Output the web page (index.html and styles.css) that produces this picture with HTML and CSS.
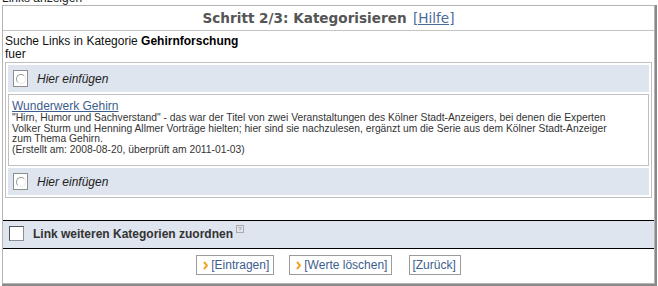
FILE: index.html
```html
<!DOCTYPE html>
<html lang="de">
<head>
  <meta charset="UTF-8" />
  <title>Links eintragen</title>
  <link rel="stylesheet" href="styles.css">
</head>
<body>
  <div class="crumb">Links anzeigen</div>

  <div class="frame">
    <div class="panel">
      <!-- Kopf -->
      <div class="head">
        <span class="step">Schritt 2/3: Kategorisieren</span>
        <a class="help" href="#">[Hilfe]</a>
      </div>

      <div class="search">
        Suche Links in Kategorie <b>Gehirnforschung</b><br />
        fuer
      </div>

      <!-- Linkliste -->
      <div class="list">
        <div class="slot">
          <span class="radio"><span class="dot"></span></span>
          <span class="slot-label">Hier einfügen</span>
        </div>
        <div class="entry">
          <a class="entry-title" href="#">Wunderwerk Gehirn</a>
          <p class="entry-text">"Hirn, Humor und Sachverstand" - das war der Titel von zwei Veranstaltungen des Kölner Stadt-Anzeigers, bei denen die Experten Volker Sturm und Henning Allmer Vorträge hielten; hier sind sie nachzulesen, ergänzt um die Serie aus dem Kölner Stadt-Anzeiger zum Thema Gehirn.<br />(Erstellt am: 2008-08-20, überprüft am 2011-01-03)</p>
        </div>
        <div class="slot">
          <span class="radio"><span class="dot"></span></span>
          <span class="slot-label">Hier einfügen</span>
        </div>
      </div>

      <!-- weitere Kategorien -->
      <div class="more">
        <span class="check"></span>
        <span class="more-label">Link weiteren Kategorien zuordnen</span>
        <span class="qmark">?</span>
      </div>

      <div class="actions">
        <a class="btn" href="#">
          <svg class="arrow" width="5" height="9" viewBox="0 0 5 9"><polyline points="1,1 4,4.5 1,8" fill="none" stroke="#f2a31c" stroke-width="2"/></svg>[Eintragen]</a>
        <a class="btn" href="#">
          <svg class="arrow" width="5" height="9" viewBox="0 0 5 9"><polyline points="1,1 4,4.5 1,8" fill="none" stroke="#f2a31c" stroke-width="2"/></svg>[Werte löschen]</a>
        <a class="btn plain" href="#">[Zurück]</a>
      </div>
    </div>
  </div>
</body>
</html>
```

FILE: styles.css
```css
* { margin: 0; padding: 0; box-sizing: border-box; }
body {
  font-family: "Liberation Sans", Arial, sans-serif;
  font-size: 12px;
  color: #222;
  background: #fff;
  width: 658px;
  height: 286px;
  overflow: hidden;
}
a { color: #3d5d8e; }

.crumb {
  font-size: 12px;
  line-height: 14px;
  margin-top: -9px;
  padding-left: 2px;
  color: #222;
}

.frame {
  margin-left: 2px;
  width: 655px;
  border-right: 2px solid #8a8a8a;
  border-bottom: 2px solid #8a8a8a;
}
.panel {
  border: 1px solid #b4b4b4;
  height: 279px;
}

.head {
  height: 25px;
  border-bottom: 1px solid #c4c4c4;
  text-align: center;
  padding-top: 4px;
  font-family: "DejaVu Sans", Verdana, sans-serif;
  font-size: 13.6px;
}
.step { font-weight: bold; color: #555; }
.help { color: #4b6b9b; margin-left: 2px; }

.search {
  padding: 4px 2px 0;
  line-height: 13px;
  color: #111;
}
.search b { font-weight: bold; color: #000; }

.list {
  margin: 1px 2px 0 2px;
  border: 1px solid #c0c0c0;
  padding: 2px;
}
.slot {
  display: flex;
  align-items: center;
  height: 27px;
  background: #dee5ee;
  padding-left: 5px;
}
.radio {
  width: 15px;
  height: 17px;
  border: 1px solid #8e8e8e;
  background: #fff;
  display: flex;
  align-items: center;
  justify-content: center;
}
.dot {
  width: 10px;
  height: 10px;
  border-radius: 50%;
  border: 1px solid #9a9a9a;
  border-right-color: #e8e8e8;
  border-bottom-color: #e8e8e8;
}
.slot-label {
  font-style: italic;
  margin-left: 9px;
  color: #222;
}
.entry {
  margin: 2px 0;
  border: 1px solid #c0c0c0;
  background: #fff;
  padding: 4px 3px 3px;
  height: 72px;
}
.entry-title { display: block; line-height: 14px; }
.entry-text {
  font-size: 10.3px;
  line-height: 10.6px;
  color: #333;
  padding-right: 22px;
}

.more {
  margin-top: 22px;
  border-top: 1px solid #000;
  border-bottom: 1px solid #000;
  background: #dee5ee;
  height: 29px;
  display: flex;
  align-items: center;
  padding-left: 6px;
  padding-bottom: 2px;
}
.check {
  width: 15px;
  height: 15px;
  border: 1px solid #8e8e8e;
  border-top-color: #555;
  border-left-color: #555;
  background: #fff;
}
.more-label {
  margin-left: 9px;
  color: #333;
  font-weight: 600;
}
.qmark {
  align-self: flex-start;
  margin-top: 4px;
  margin-left: 3px;
  width: 8px;
  height: 8px;
  border: 1px solid #aaa;
  font-size: 6px;
  line-height: 6px;
  text-align: center;
  color: #888;
}

.actions {
  display: flex;
  justify-content: center;
  gap: 15px;
  padding-top: 6px;
}
.btn {
  display: flex;
  align-items: center;
  height: 20px;
  border: 1px solid #9c9c9c;
  padding: 0 4px 0 6px;
  text-decoration: none;
  color: #3d5d8e;
}
.btn.plain { padding-left: 2px; margin-left: 2px; }
.arrow { margin-right: 3px; }
```
